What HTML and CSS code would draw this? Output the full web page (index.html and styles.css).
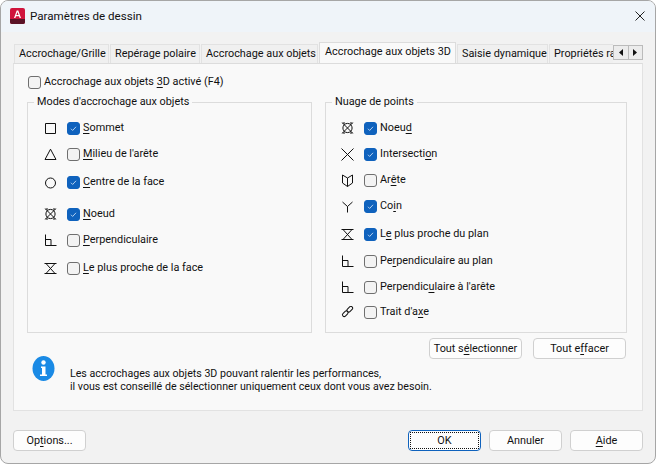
FILE: index.html
```html
<!DOCTYPE html>
<html lang="fr">
<head>
<meta charset="utf-8">
<title>Paramètres de dessin</title>
<link rel="stylesheet" href="styles.css">
</head>
<body>
<svg class="defs" width="0" height="0" aria-hidden="true">
  <symbol id="i-square" viewBox="0 0 13 13"><path d="M1.500 1.500h10v10h-10z"/></symbol>
  <symbol id="i-tri" viewBox="0 0 13 13"><path d="M6.500 1.200 1 11.500h11z"/></symbol>
  <symbol id="i-circle" viewBox="0 0 13 13"><circle cx="6.500" cy="7" r="5"/></symbol>
  <symbol id="i-node" viewBox="0 0 13 13"><circle cx="6.500" cy="6" r="4.600"/><path d="M1.200 .7l10.600 10.600M11.800 .7 1.200 11.300M1.500 1h2.500M9 1h2.500M1.500 11h2.500M9 11h2.500"/></symbol>
  <symbol id="i-perp" viewBox="0 0 13 13"><path d="M1.500 .5v11h11M1.500 5.500h5.500v6"/></symbol>
  <symbol id="i-near" viewBox="0 0 13 13"><path d="M.5 1.500h12M.5 11.500h12M2 1.500l9 10M11 1.500l-9 10"/></symbol>
  <symbol id="i-x" viewBox="0 0 13 13"><path d="M.5.500l12 12M12.500.500l-12 12"/></symbol>
  <symbol id="i-edge" viewBox="0 0 13 13"><path d="M6.500 4 1.500 1v8l5 3.500 5-3.500V1zM6.500 4v8.500"/></symbol>
  <symbol id="i-y" viewBox="0 0 13 13"><path d="M1.500 2 6.500 6.500 11.500 2M6.500 6.500V12.500"/></symbol>
  <symbol id="i-axe" viewBox="0 0 13 13"><rect x="1" y="6" width="6.500" height="3.500" rx="1.700" transform="rotate(-45 4.200 7.700)"/><rect x="5.500" y="1.500" width="6.500" height="3.500" rx="1.700" transform="rotate(-45 8.700 3.200)"/></symbol>
</svg>
<div class="window">
  <header class="titlebar">
    <svg class="app-icon" width="15" height="16" viewBox="0 0 15 16"><path d="M2 0h11a2 2 0 0 1 2 2v12a2 2 0 0 1-2 2H2a2 2 0 0 1-2-2V2a2 2 0 0 1 2-2z" fill="#d0143c"/><path d="M0 11h15v3a2 2 0 0 1-2 2H2a2 2 0 0 1-2-2z" fill="#5a1226"/><path d="M4 10 6.700 2.500h1.600L11 10H9.600L9 8.300H6L5.400 10zM6.400 7.100h2.200L7.500 3.900z" fill="#fff"/></svg>
    <span class="title">Paramètres de dessin</span>
    <svg class="close" width="10" height="10" viewBox="0 0 10 10"><path d="M.5.500l9 9M9.500.500l-9 9"/></svg>
  </header>
  <main class="content">
    <nav class="tabs">
      <span class="tab w1">Accrochage/Grille</span>
      <span class="tab w2">Repérage polaire</span>
      <span class="tab w3">Accrochage aux objets</span>
      <span class="tab active">Accrochage aux objets 3D</span>
      <span class="tab w5">Saisie dynamique</span>
      <span class="tab w6">Propriétés rapides</span>
      <span class="arrows"><span class="arrow"><svg width="4" height="7" viewBox="0 0 4 7"><path d="M4 0v7L0 3.500z"/></svg></span><span class="arrow"><svg width="4" height="7" viewBox="0 0 4 7"><path d="M0 0v7l4-3.500z"/></svg></span></span>
    </nav>
    <section class="panel">
      <label class="check master"><span class="box"></span><span>Accrochage aux objets <u>3</u>D activé (F4)</span></label>
      <div class="groups">
        <fieldset class="group left">
          <legend>Modes d'accrochage aux objets</legend>
          <div class="rows rows-left">
            <div class="row"><svg class="ico"><use href="#i-square"/></svg><span class="box on"><svg viewBox="0 0 13 13"><path d="M3.500 6.800 5.500 8.800 9.500 4.500"/></svg></span><span><u>S</u>ommet</span></div>
            <div class="row"><svg class="ico"><use href="#i-tri"/></svg><span class="box"></span><span><u>M</u>ilieu de l'arête</span></div>
            <div class="row"><svg class="ico"><use href="#i-circle"/></svg><span class="box on"><svg viewBox="0 0 13 13"><path d="M3.500 6.800 5.500 8.800 9.500 4.500"/></svg></span><span><u>C</u>entre de la face</span></div>
            <div class="row"><svg class="ico"><use href="#i-node"/></svg><span class="box on"><svg viewBox="0 0 13 13"><path d="M3.500 6.800 5.500 8.800 9.500 4.500"/></svg></span><span><u>N</u>oeud</span></div>
            <div class="row"><svg class="ico"><use href="#i-perp"/></svg><span class="box"></span><span><u>P</u>erpendiculaire</span></div>
            <div class="row"><svg class="ico"><use href="#i-near"/></svg><span class="box"></span><span><u>L</u>e plus proche de la face</span></div>
          </div>
        </fieldset>
        <fieldset class="group right">
          <legend>Nuage de points</legend>
          <div class="rows rows-right">
            <div class="row"><svg class="ico"><use href="#i-node"/></svg><span class="box on"><svg viewBox="0 0 13 13"><path d="M3.500 6.800 5.500 8.800 9.500 4.500"/></svg></span><span>Noeu<u>d</u></span></div>
            <div class="row"><svg class="ico"><use href="#i-x"/></svg><span class="box on"><svg viewBox="0 0 13 13"><path d="M3.500 6.800 5.500 8.800 9.500 4.500"/></svg></span><span>Intersecti<u>o</u>n</span></div>
            <div class="row"><svg class="ico"><use href="#i-edge"/></svg><span class="box"></span><span>Ar<u>ê</u>te</span></div>
            <div class="row"><svg class="ico"><use href="#i-y"/></svg><span class="box on"><svg viewBox="0 0 13 13"><path d="M3.500 6.800 5.500 8.800 9.500 4.500"/></svg></span><span>Co<u>i</u>n</span></div>
            <div class="row"><svg class="ico"><use href="#i-near"/></svg><span class="box on"><svg viewBox="0 0 13 13"><path d="M3.500 6.800 5.500 8.800 9.500 4.500"/></svg></span><span>L<u>e</u> plus proche du plan</span></div>
            <div class="row"><svg class="ico"><use href="#i-perp"/></svg><span class="box"></span><span>Pe<u>r</u>pendiculaire au plan</span></div>
            <div class="row"><svg class="ico"><use href="#i-perp"/></svg><span class="box"></span><span>Perpendic<u>u</u>laire à l'arête</span></div>
            <div class="row"><svg class="ico"><use href="#i-axe"/></svg><span class="box"></span><span>Trait d'a<u>x</u>e</span></div>
          </div>
        </fieldset>
      </div>
      <div class="select-btns">
        <button class="btn sel">Tout s<u>é</u>lectionner</button>
        <button class="btn sel">Tout e<u>f</u>facer</button>
      </div>
      <div class="note">
        <svg class="info" width="23" height="25" viewBox="0 0 23 25"><ellipse cx="11.500" cy="12.500" rx="11" ry="12.500" fill="#1a8ae5"/><circle cx="11.500" cy="6.500" r="2.200" fill="#fff"/><path d="M9 10.500h4.500v8h1.500v1.500H8v-1.500h2v-6.500H9z" fill="#fff"/></svg>
        <p>Les accrochages aux objets 3D pouvant ralentir les performances,<br>il vous est conseillé de sélectionner uniquement ceux dont vous avez besoin.</p>
      </div>
    </section>
    <footer class="footer">
      <button class="btn foot opt">Op<u>t</u>ions...</button>
      <span class="actions">
        <button class="btn foot ok"><span>OK</span></button>
        <button class="btn foot">Annuler</button>
        <button class="btn foot"><u>A</u>ide</button>
      </span>
    </footer>
  </main>
</div>
</body>
</html>
```
FILE: styles.css
```css
* { box-sizing: border-box; }
html, body { margin: 0; height: 100%; background: #fff; }
body { font: 10.850px/16px Roboto, "Noto Sans", sans-serif; color: #111; overflow: hidden; }
.defs { position: absolute; }
u { text-underline-offset: 2px; text-decoration-thickness: 1px; }

.window { width: 656px; height: 464px; border: 1px solid #a6a6a6; border-radius: 8px; overflow: hidden; background: #f2f2f2; display: flex; flex-direction: column; }
.titlebar { height: 31px; flex: none; background: #eff4f9; display: flex; align-items: center; padding: 0 10px 1px 9px; }
.app-icon { flex: none; }
.title { margin-left: 5px; font-size: 11.600px; flex: 1; }
.close { fill: none; stroke: #222; stroke-width: 1; }

.content { flex: 1; padding: 10px 12px 12px; display: flex; flex-direction: column; }
.tabs { display: flex; height: 21px; align-items: flex-end; flex: none; overflow: hidden; }
.tab { height: 19px; border: 1px solid #e2e2e2; border-bottom: 0; background: #f0f0f0; padding: 0 0 0 4px; white-space: nowrap; line-height: 17px; margin-right: 1px; flex: none; overflow: hidden; }
.w1 { width: 95px; margin-left: 1px; }
.w2 { width: 90px; }
.w3 { width: 117px; }
.tab.active { width: 137px; height: 21px; background: #f9f9f9; line-height: 18px; border-color: #dcdcdc; padding-left: 5px; }
.w5 { width: 91px; }
.w6 { width: 64px; margin-right: 0; border-right: 0; }
.arrows { display: flex; height: 15px; align-self: flex-start; margin-top: 3px; }
.arrow { width: 15.500px; height: 15px; border: 1px solid #bbb; background: #ececec; display: flex; align-items: center; justify-content: center; }
.arrow + .arrow { margin-left: -1px; }
.arrow svg { fill: #111; }

.panel { flex: 1; background: #f9f9f9; border: 1px solid #e2e2e2; border-top-color: #dcdcdc; padding: 10px 15px 0 13px; display: flex; flex-direction: column; }
.check { display: flex; align-items: center; }
.box { width: 13px; height: 13px; flex: none; border: 1px solid #6f6f6f; border-radius: 3px; background: #f3f3f3; display: block; }
.box.on { background: #0f62bd; border-color: #0f62bd; }
.box svg { display: block; width: 11px; height: 11px; fill: none; stroke: #cfe3f7; stroke-width: 1; }
.master { gap: 3px; height: 16px; margin-left: 1px; }

.groups { display: flex; justify-content: space-between; margin-top: 4px; height: 239px; flex: none; }
.group { margin: 0; padding: 0; border: 1px solid #dcdcdc; min-width: 0; }
.group legend { margin-left: 6px; padding: 0 3px; line-height: 16px; }
.left { width: 285px; }
.right { width: 302px; }
.rows { display: grid; align-items: start; padding-left: 16px; margin-top: 10px; }
.rows-left { grid-template-rows: 26px 28px 32px 26px 28px 27px; }
.rows-right { grid-template-rows: 26px 26px 26px 28px 27px 26px 25px 26px; padding-left: 15px; }
.row { display: flex; align-items: center; height: 16px; gap: 3px; }
.ico { width: 13px; height: 13px; margin-right: 7px; flex: none; fill: none; stroke: #111; stroke-width: 1; overflow: visible; }

.select-btns { display: flex; justify-content: flex-end; gap: 11px; margin-top: 5px; padding-right: 1px; }
.btn { font: inherit; color: #111; background: #fdfdfd; border: 1px solid #d0d0d0; border-radius: 4px; padding: 0; }
.sel { width: 93px; height: 21px; white-space: nowrap; }
.note { display: flex; align-items: flex-start; gap: 15px; padding-left: 5px; margin-top: -3px; }
.info { flex: none; }
.note p { margin: 11px 0 0; font-size: 10.650px; line-height: 13px; white-space: nowrap; }

.footer { display: flex; justify-content: space-between; margin-top: 19px; height: 21px; flex: none; }
.foot { width: 73px; height: 21px; }
.actions { display: flex; gap: 8px; }
.ok { border: 1px solid #0f62bd; padding: 1px; }
.ok span { display: block; height: 100%; border: 1px dotted #111; line-height: 15px; }
```
